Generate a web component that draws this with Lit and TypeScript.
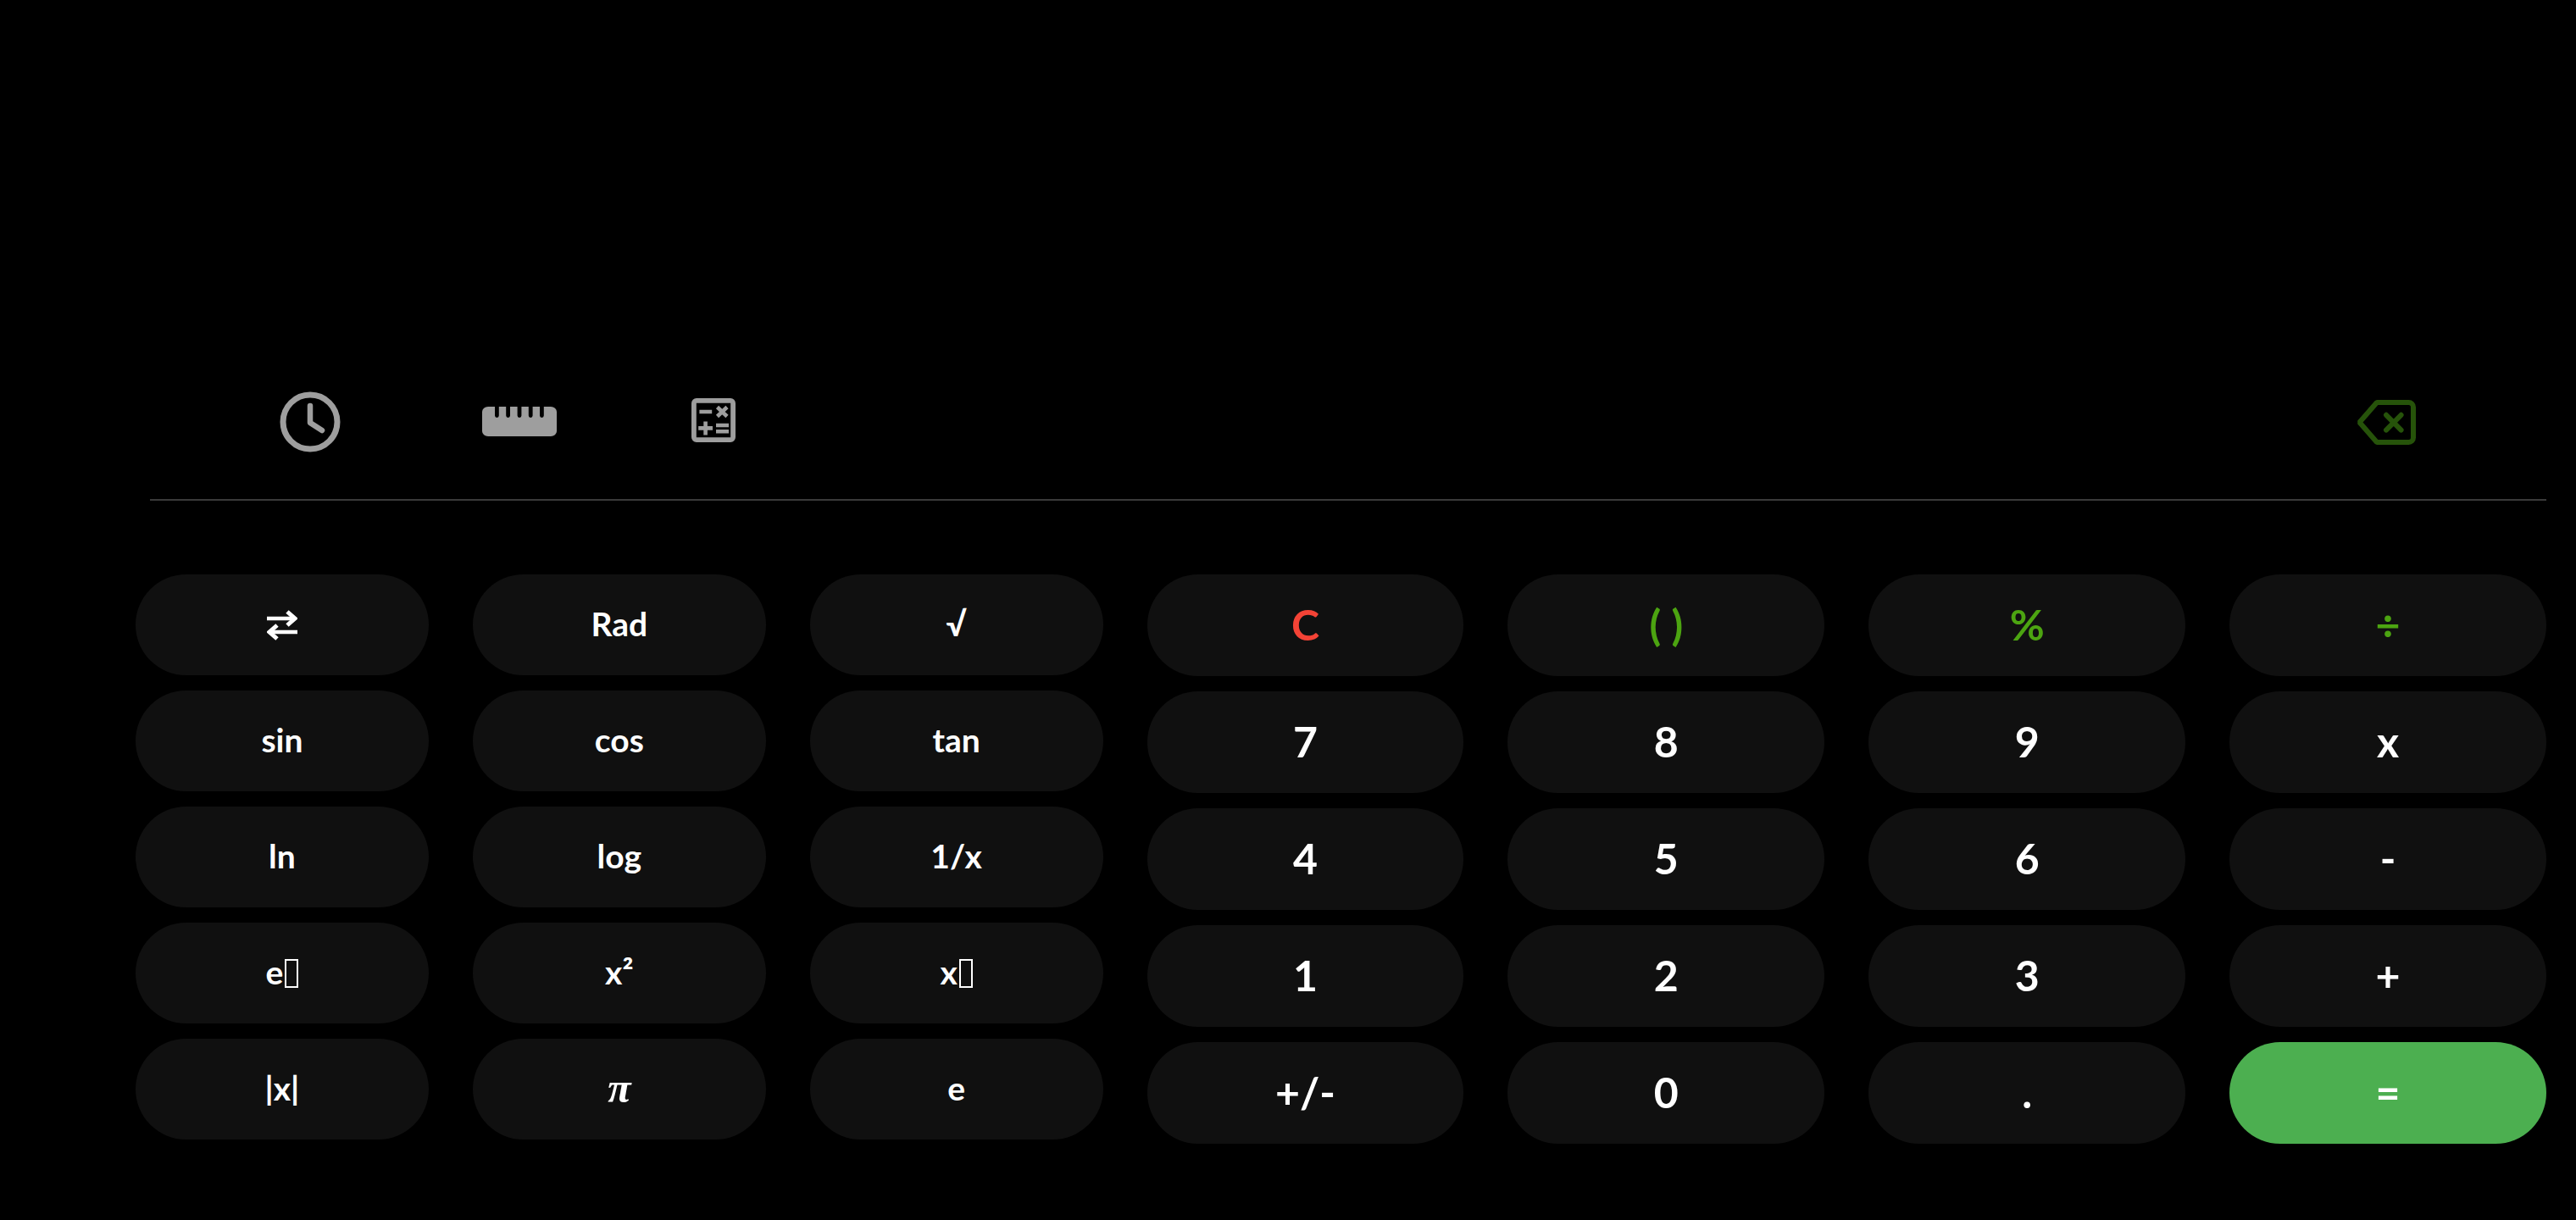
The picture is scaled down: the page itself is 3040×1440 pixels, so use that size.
import { LitElement, html, css, svg, nothing } from "lit";
import { customElement, property } from "lit/decorators.js";
import { classMap } from "lit/directives/class-map.js";

interface Key {
  label: string;
  name?: string;
  tone?: "danger" | "accent" | "equals";
  glyph?: "swap" | "pi";
  box?: boolean;
}

const SCIENTIFIC: Key[] = [
  { label: "", name: "Swap functions", glyph: "swap" },
  { label: "Rad" },
  { label: "√" },
  { label: "sin" },
  { label: "cos" },
  { label: "tan" },
  { label: "ln" },
  { label: "log" },
  { label: "1/x" },
  { label: "e", name: "e to the power x", box: true },
  { label: "x²" },
  { label: "x", name: "x to the power y", box: true },
  { label: "|x|" },
  { label: "π", glyph: "pi" },
  { label: "e" },
];

const STANDARD: Key[] = [
  { label: "C", tone: "danger" },
  { label: "( )", tone: "accent" },
  { label: "%", tone: "accent" },
  { label: "÷", tone: "accent" },
  { label: "7" },
  { label: "8" },
  { label: "9" },
  { label: "x" },
  { label: "4" },
  { label: "5" },
  { label: "6" },
  { label: "-" },
  { label: "1" },
  { label: "2" },
  { label: "3" },
  { label: "+" },
  { label: "+/-" },
  { label: "0" },
  { label: "." },
  { label: "=", tone: "equals" },
];

const swapIcon = html`<svg class="arrows" width="36" height="44" viewBox="0 0 36 44" aria-hidden="true">
  ${svg`<path d="M0 14H33M36 30H3" stroke-width="4.600" />
  <path d="M24 6L33 14L24 22M12 22L3 30L12 38" stroke-width="5" />`}
</svg>`;

const clockIcon = html`<svg class="icon" width="88" height="88" viewBox="0 0 88 88" aria-hidden="true">
  ${svg`<circle cx="44" cy="44" r="32" stroke-width="7" />
  <path d="M44 25V45L58 54" stroke-width="6.500" stroke-linecap="round" stroke-linejoin="round" />`}
</svg>`;

const rulerIcon = html`<svg class="icon" width="88" height="36" viewBox="0 0 88 36" aria-hidden="true">
  ${svg`<path class="solid" d="M7 0H15V10.500a2.400 2.400 0 0 0 4.800 0V0H28.200V10.500a2.400 2.400 0 0 0 4.800 0V0H41.600V10.500a2.400 2.400 0 0 0 4.800 0V0H54.800V10.500a2.400 2.400 0 0 0 4.800 0V0H68V10.500a2.400 2.400 0 0 0 4.800 0V0H81a7 6 0 0 1 7 6V29a7 6 0 0 1-7 6H7a7 6 0 0 1-7-6V6a7 6 0 0 1 7-6Z" />`}
</svg>`;

const modesIcon = html`<svg class="icon" width="52" height="56" viewBox="0 0 52 56" aria-hidden="true">
  ${svg`<rect x="2.900" y="2.900" width="46.200" height="46.200" rx="3" stroke-width="5.800" />
  <path d="M9.400 16H24.200M30.500 10.500L42 21.500M42 10.500L30.500 21.500M8.200 35.400H25M16.600 27.400V43.400M29 32H44M29 39.200H44" stroke-width="4.600" />`}
</svg>`;

const backspaceIcon = html`<svg class="icon" width="70" height="53" viewBox="0 0 70 53" aria-hidden="true">
  ${svg`<path d="M24 3H61.500a5.500 5.500 0 0 1 5.500 5.500V44.500a5.500 5.500 0 0 1-5.500 5.500H24L3.500 26.500Z" stroke-width="6" stroke-linejoin="bevel" />
  <path d="M35 17.800L52.600 35.600M52.600 17.800L35 35.600" stroke-width="6" stroke-linecap="round" />`}
</svg>`;

@customElement("calc-keypad")
export class CalcKeypad extends LitElement {
  @property({ attribute: false }) keys: Key[] = [];
  @property({ reflect: true }) kind: "scientific" | "standard" = "standard";

  static styles = css`
    :host {
      display: block;
    }
    .pad {
      display: grid;
      grid-template-columns: repeat(4, minmax(0, 1fr));
      gap: 18px 52px;
      font-size: 50px;
    }
    .pad.scientific {
      grid-template-columns: repeat(3, minmax(0, 1fr));
      font-size: 39px;
    }
    .key {
      box-sizing: border-box;
      display: flex;
      align-items: center;
      justify-content: center;
      height: 120px;
      padding: 0 0 3px;
      border: 0;
      border-radius: 60px;
      background: #101010;
      color: #fff;
      font-family: Lato, "DejaVu Sans", sans-serif;
      font-size: inherit;
      font-weight: 700;
      line-height: 60px;
      white-space: pre;
      cursor: pointer;
    }
    .scientific .key {
      height: 119px;
    }
    .danger {
      color: #f44336;
    }
    .accent {
      color: #4ca411;
    }
    .equals {
      background: #4caf50;
    }
    .scientific .pi {
      font-family: "Liberation Serif", serif;
      font-size: 50px;
      font-style: italic;
    }
    .arrows {
      display: block;
      margin-top: 3px;
      fill: none;
      stroke: currentColor;
    }
    .box {
      box-sizing: border-box;
      width: 16px;
      height: 34px;
      margin: 3px 0 0 2px;
      border: 2px solid #fff;
    }
  `;

  render() {
    return html`<div class=${classMap({ pad: true, scientific: this.kind === "scientific" })}>
      ${this.keys.map(
        (key) => html`<button
          type="button"
          class=${classMap({
            key: true,
            [key.tone ?? "plain"]: true,
            [key.glyph ?? "text"]: true,
          })}
          aria-label=${key.name ?? nothing}
        >${key.glyph === "swap" ? swapIcon : html`<span>${key.label}</span>`}${key.box
          ? html`<span class="box"></span>`
          : nothing}</button>`
      )}
    </div>`;
  }
}

@customElement("app-root")
export class AppRoot extends LitElement {
  static styles = css`
    :host {
      display: flex;
      flex-direction: column;
      box-sizing: border-box;
      min-height: 100vh;
      padding: 0 35px 90px 160px;
      background: #000;
    }
    .display {
      flex: 1;
    }
    .toolbar {
      display: flex;
      align-items: center;
      gap: 159px;
      margin-left: 17px;
      padding: 0 154px 47px 145px;
      border-bottom: 2px solid #3a3a3a;
    }
    .tool {
      display: flex;
      padding: 0;
      border: 0;
      background: none;
      color: #9e9e9e;
      cursor: pointer;
    }
    .erase {
      margin-left: auto;
      color: #26530a;
    }
    .icon {
      display: block;
      fill: none;
      stroke: currentColor;
    }
    .solid {
      fill: currentColor;
      stroke: none;
    }
    .pads {
      display: grid;
      grid-template-columns: 571fr 826fr;
      align-items: start;
      gap: 52px;
      padding-top: 87px;
    }
  `;

  render() {
    return html`
      <div class="display" role="status"></div>
      <div class="toolbar">
        <button type="button" class="tool" aria-label="History">${clockIcon}</button>
        <button type="button" class="tool" aria-label="Unit converter">${rulerIcon}</button>
        <button type="button" class="tool" aria-label="Calculator mode">${modesIcon}</button>
        <button type="button" class="tool erase" aria-label="Backspace">${backspaceIcon}</button>
      </div>
      <div class="pads">
        <calc-keypad kind="scientific" .keys=${SCIENTIFIC}></calc-keypad>
        <calc-keypad kind="standard" .keys=${STANDARD}></calc-keypad>
      </div>
    `;
  }
}
